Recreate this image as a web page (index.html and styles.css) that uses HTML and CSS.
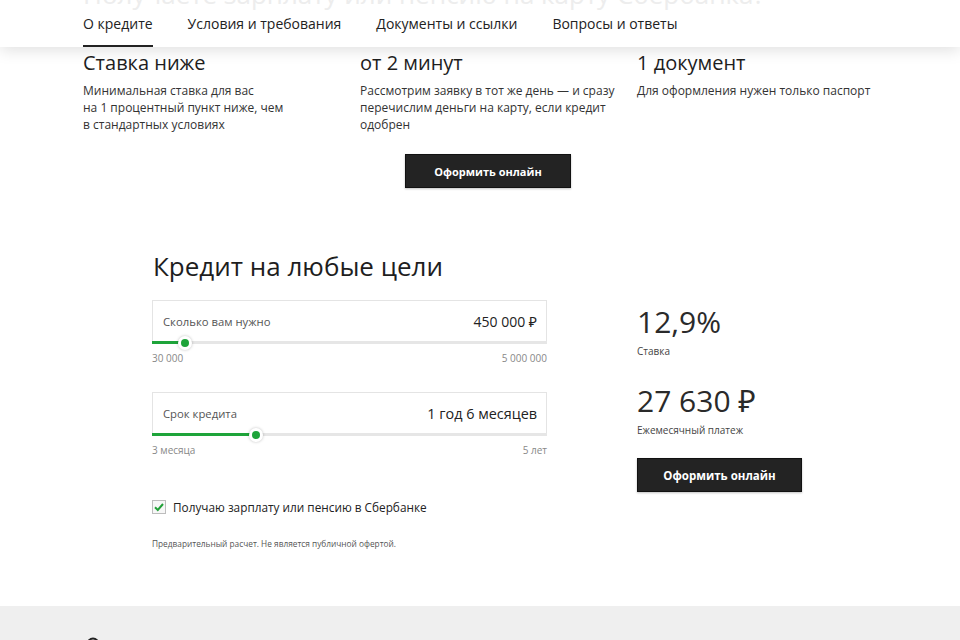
FILE: index.html
```html
<!DOCTYPE html>
<html lang="ru">
<head>
<meta charset="utf-8">
<title>Кредит на любые цели</title>
<link rel="stylesheet" href="styles.css">
</head>
<body>
<header class="header">
  <div class="ghost">Получаете зарплату или пенсию на карту Сбербанка?</div>
  <nav class="nav">
    <a class="nav-item active">О кредите</a>
    <a class="nav-item">Условия и требования</a>
    <a class="nav-item">Документы и ссылки</a>
    <a class="nav-item">Вопросы и ответы</a>
  </nav>
</header>

<section class="features">
  <div class="feature-grid">
    <div class="feature">
      <h3 class="feature-title">Ставка ниже</h3>
      <p class="feature-text">Минимальная ставка для вас<br>на 1 процентный пункт ниже, чем<br>в стандартных условиях</p>
    </div>
    <div class="feature">
      <h3 class="feature-title">от 2 минут</h3>
      <p class="feature-text">Рассмотрим заявку в тот же день — и сразу<br>перечислим деньги на карту, если кредит<br>одобрен</p>
    </div>
    <div class="feature">
      <h3 class="feature-title">1 документ</h3>
      <p class="feature-text">Для оформления нужен только паспорт</p>
    </div>
  </div>
  <div class="btn-row">
    <button class="btn">Оформить онлайн</button>
  </div>
</section>

<section class="calc">
  <h2 class="calc-title">Кредит на любые цели</h2>
  <div class="calc-body">
    <div class="calc-left">
      <div class="field">
        <div class="field-box">
          <span class="field-label">Сколько вам нужно</span>
          <span class="field-value">450 000 ₽</span>
        </div>
        <div class="track"><div class="fill" style="width:33px"><span class="thumb"></span></div></div>
        <div class="range"><span>30 000</span><span>5 000 000</span></div>
      </div>
      <div class="field field-second">
        <div class="field-box">
          <span class="field-label">Срок кредита</span>
          <span class="field-value">1 год 6 месяцев</span>
        </div>
        <div class="track"><div class="fill" style="width:104px"><span class="thumb"></span></div></div>
        <div class="range"><span>3 месяца</span><span>5 лет</span></div>
      </div>
      <label class="check">
        <span class="checkbox">
          <svg width="12" height="12" viewBox="0 0 12 12"><path d="M2 6.2 L4.8 9 L10 3" fill="none" stroke="#21a038" stroke-width="2"/></svg>
        </span>
        <span>Получаю зарплату или пенсию в Сбербанке</span>
      </label>
      <p class="note">Предварительный расчет. Не является публичной офертой.</p>
    </div>
    <div class="calc-right">
      <div class="big">12,9%</div>
      <div class="caption">Ставка</div>
      <div class="big big-second">27 630 ₽</div>
      <div class="caption">Ежемесячный платеж</div>
      <button class="btn btn-right">Оформить онлайн</button>
    </div>
  </div>
</section>

<footer class="footer">
  <svg class="footer-icon" width="14" height="14" viewBox="0 0 14 14">
    <circle cx="7" cy="7" r="5.5" fill="none" stroke="#222" stroke-width="2"/>
  </svg>
</footer>
</body>
</html>
```

FILE: styles.css
```css
* { box-sizing: border-box; }
html, body { margin: 0; padding: 0; }
body {
  font-family: "Open Sans", "Noto Sans", sans-serif;
  color: #222;
  background: #fff;
  width: 960px;
  height: 640px;
  overflow: hidden;
}

.header {
  position: relative;
  z-index: 2;
  height: 47px;
  background: #fff;
  overflow: hidden;
  box-shadow: 0 3px 16px rgba(0, 0, 0, 0.13);
  padding-left: 83px;
}
.ghost {
  font-size: 26px;
  line-height: 28px;
  margin-top: -20px;
  color: #ededed;
  white-space: nowrap;
}
.nav {
  display: flex;
  gap: 35px;
}
.nav-item {
  height: 39px;
  padding-top: 6px;
  font-size: 14px;
  line-height: 20px;
  color: #222;
  border-bottom: 2px solid transparent;
}
.nav-item.active { border-bottom-color: #222; }

.features {
  position: relative;
  z-index: 1;
  width: 810px;
  margin-left: 83px;
  padding-top: 4px;
}
.feature-grid {
  display: grid;
  grid-template-columns: 277px 277px auto;
}
.feature-title {
  margin: 0;
  font-size: 20px;
  line-height: 24px;
  font-weight: 400;
  color: #1e1e1e;
}
.feature-text {
  margin: 7px 0 0;
  font-size: 12px;
  line-height: 17px;
  color: #333;
}
.btn-row {
  display: flex;
  justify-content: center;
  margin-top: 21px;
}
.btn {
  width: 166px;
  height: 34px;
  background: #232323;
  border: 1px solid #111;
  color: #fff;
  font-family: "Open Sans", sans-serif;
  font-weight: 700;
  font-size: 11px;
  padding: 0;
  box-shadow: 0 1px 2px rgba(0,0,0,0.25);
}

.calc {
  padding-left: 152px;
  margin-top: 62px;
}
.calc-title {
  margin: 0 0 0 1px;
  font-size: 26px;
  line-height: 32px;
  font-weight: 400;
  color: #1e1e1e;
}
.calc-body {
  display: flex;
  gap: 90px;
  margin-top: 18px;
}
.calc-left { width: 395px; }
.field-box {
  height: 41px;
  border: 1px solid #e4e4e4;
  border-bottom: none;
  display: flex;
  align-items: center;
  justify-content: space-between;
  padding: 1px 9px 0 10px;
}
.field-label {
  font-size: 11.3px;
  color: #555;
}
.field-value {
  font-size: 14px;
  color: #222;
}
.field-second .field-value { font-size: 14.4px; }
.track {
  height: 3px;
  background: #e6e6e6;
}
.fill {
  position: relative;
  height: 3px;
  background: #1ea43a;
}
.thumb {
  position: absolute;
  right: -7px;
  top: -5.5px;
  width: 14px;
  height: 14px;
  border-radius: 50%;
  background: #fff;
  box-shadow: 0 0 3px rgba(0,0,0,0.25);
  display: flex;
  align-items: center;
  justify-content: center;
}
.thumb::after {
  content: "";
  width: 8px;
  height: 8px;
  border-radius: 50%;
  background: #1ea43a;
}
.range {
  display: flex;
  justify-content: space-between;
  margin-top: 7px;
  font-size: 10px;
  line-height: 14px;
  color: #888;
}
.field-second { margin-top: 27px; }

.check {
  display: flex;
  align-items: center;
  gap: 7px;
  margin-top: 43px;
  font-size: 11.8px;
  line-height: 14px;
  color: #222;
}
.checkbox {
  width: 14px;
  height: 14px;
  border: 1px solid #bdbdbd;
  background: #f7f7f7;
  display: flex;
  align-items: center;
  justify-content: center;
}
.note {
  margin: 24px 0 0;
  font-size: 8.3px;
  line-height: 12px;
  color: #555;
}

.calc-right { padding-top: 4px; }
.big {
  font-size: 30px;
  line-height: 36px;
  color: #2a2a2a;
}
.big-second { margin-top: 25px; }
.caption {
  margin-top: 4px;
  font-size: 10px;
  line-height: 14px;
  color: #444;
}
.btn-right {
  display: block;
  width: 165px;
  margin-top: 21px;
  font-size: 11.5px;
}

.footer {
  margin-top: 56px;
  background: #efefef;
  height: 200px;
  padding: 31px 0 0 86px;
}
.footer-icon { display: block; }
```
